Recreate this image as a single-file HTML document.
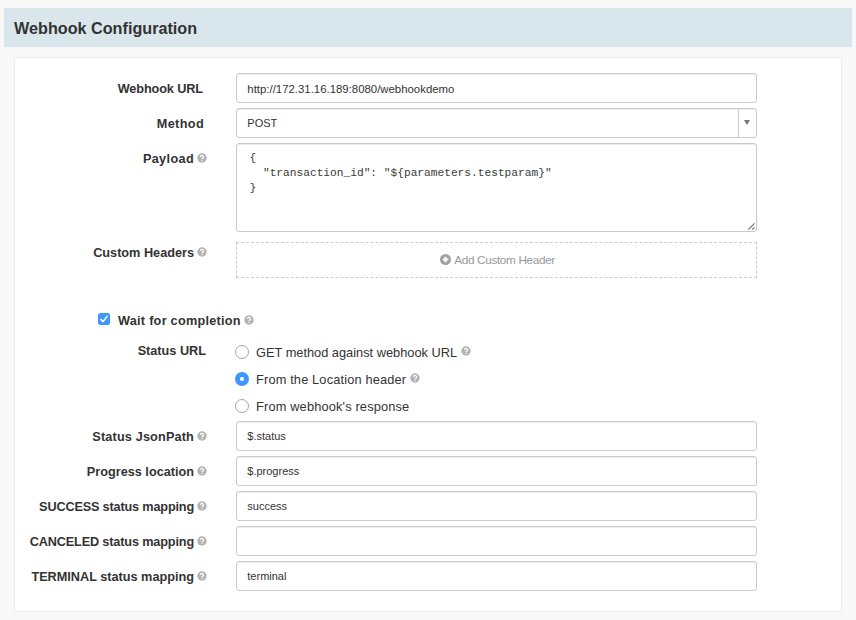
<!DOCTYPE html>
<html><head><meta charset="utf-8">
<style>
*{box-sizing:border-box;margin:0;padding:0}
html,body{width:856px;height:620px;overflow:hidden;background:#f8f8f8;font-family:"Liberation Sans",sans-serif;color:#333}
.hdr{position:absolute;left:4px;top:8px;width:848px;height:39px;background:#d9e7ec}
.hdr span{position:absolute;left:10px;top:11.2px;font-size:16.2px;font-weight:bold;color:#333;white-space:nowrap}
.panel{position:absolute;left:14px;top:57px;width:828px;height:555px;background:#fff;border:1px solid #ececec}
.lbl{position:absolute;font-weight:bold;font-size:12.7px;line-height:15px;color:#333;white-space:nowrap}
.r{right:653px}
.rh{right:649px}
.help{display:inline-block;width:10px;height:10px;vertical-align:top;margin-top:1.4px;margin-left:3px}
.inp{position:absolute;left:236px;width:521px;height:30px;border:1px solid #ccc;border-radius:3px;background:#fff;box-shadow:inset 0 1px 1px rgba(0,0,0,.075)}
.inp span{position:absolute;left:10.3px;top:7px;font-size:11px;line-height:14px;color:#333;white-space:nowrap}
.ta{position:absolute;left:236px;top:143px;width:521px;height:89px;border:1px solid #c8c8c8;border-radius:3px;background:#fff;box-shadow:inset 0 1px 1px rgba(0,0,0,.075)}
.ta pre{position:absolute;left:12.5px;top:7px;font-family:"Liberation Mono",monospace;font-size:11.2px;line-height:15px;color:#3a3a3a}
.dash{position:absolute;left:236px;top:242px;width:521px;height:36px;border:1px dashed #ccc}
.dash span{position:absolute;left:203px;top:10px;font-size:11.8px;letter-spacing:-.37px;color:#999;white-space:nowrap}
.plus{display:inline-block;width:11px;height:11px;vertical-align:top;margin-top:.5px;margin-right:3px;margin-left:.3px}
.cb{position:absolute;left:98px;top:313px;width:12px;height:12px;border-radius:2.5px;background:#3d98fb}
.rad{position:absolute;left:235px;width:14px;height:14px;border-radius:50%;border:1px solid #a6a6a6;background:#fff}
.rad.on{border:none;background:#3d98fb}
.rad.on::after{content:"";position:absolute;left:5.25px;top:5.25px;width:3.5px;height:3.5px;border-radius:50%;background:#fff}
.opt{position:absolute;left:256px;font-size:12.8px;line-height:15px;color:#333;white-space:nowrap}
.opt .help{margin-left:4px}
</style></head><body>
<div class="hdr"><span>Webhook Configuration</span></div>
<div class="panel"></div>

<div class="lbl r" style="top:82px"><span style="letter-spacing:-.1px">Webhook URL</span></div>
<div class="inp" style="top:73px"><span style="font-size:11.4px;top:7.5px">http://172.31.16.189:8080/webhookdemo</span></div>

<div class="lbl r" style="top:117px;right:652px"><span style="letter-spacing:.35px">Method</span></div>
<div class="inp" style="top:108px"><span>POST</span>
<div style="position:absolute;left:501px;top:0;width:1px;height:28px;background:#ccc"></div>
<div style="position:absolute;left:507px;top:11px;width:0;height:0;border-left:3px solid transparent;border-right:3px solid transparent;border-top:5px solid #777"></div>
</div>

<div class="lbl rh" style="top:152px"><span style="letter-spacing:.35px">Payload</span><svg class="help" viewBox="0 0 10 10"><circle cx="5" cy="5" r="4.7" fill="#b3b3b3"/><path d="M3.6 3.9A1.45 1.45 0 1 1 5.6 5.25Q5 5.55 5 6.2" fill="none" stroke="#fff" stroke-width="1.2"/><circle cx="5" cy="7.6" r=".7" fill="#fff"/></svg></div>
<div class="ta"><pre>{
  "transaction_id": "${parameters.testparam}"
}</pre><svg width="10" height="10" style="position:absolute;left:510px;top:77px"><path d="M1.3 8.6L7.6 2.3M5.2 8.6L7.6 6.3" stroke="#666" stroke-width="1.1"/></svg></div>

<div class="lbl rh" style="top:246px">Custom Headers<svg class="help" viewBox="0 0 10 10"><circle cx="5" cy="5" r="4.7" fill="#b3b3b3"/><path d="M3.6 3.9A1.45 1.45 0 1 1 5.6 5.25Q5 5.55 5 6.2" fill="none" stroke="#fff" stroke-width="1.2"/><circle cx="5" cy="7.6" r=".7" fill="#fff"/></svg></div>
<div class="dash"><span><svg class="plus" viewBox="0 0 11 11"><circle cx="5.5" cy="5.5" r="5.5" fill="#a0a0a0"/><path d="M5.5 2.7v5.6M2.7 5.5h5.6" stroke="#fff" stroke-width="2.1"/></svg>Add Custom Header</span></div>

<div class="cb"><svg width="12" height="12" style="position:absolute;left:0;top:0"><path d="M2.8 6.4L5.1 8.6L9.1 3.2" fill="none" stroke="#fff" stroke-width="1.5" stroke-linecap="round" stroke-linejoin="round"/></svg></div>
<div class="lbl" style="left:118px;top:314px"><span style="letter-spacing:.26px">Wait for completion</span><svg class="help" viewBox="0 0 10 10"><circle cx="5" cy="5" r="4.7" fill="#b3b3b3"/><path d="M3.6 3.9A1.45 1.45 0 1 1 5.6 5.25Q5 5.55 5 6.2" fill="none" stroke="#fff" stroke-width="1.2"/><circle cx="5" cy="7.6" r=".7" fill="#fff"/></svg></div>
<div class="lbl rh" style="top:344px;right:650px">Status URL</div>

<div class="rad" style="top:345px"></div>
<div class="opt" style="top:345px">GET method against webhook URL<svg class="help" viewBox="0 0 10 10"><circle cx="5" cy="5" r="4.7" fill="#b3b3b3"/><path d="M3.6 3.9A1.45 1.45 0 1 1 5.6 5.25Q5 5.55 5 6.2" fill="none" stroke="#fff" stroke-width="1.2"/><circle cx="5" cy="7.6" r=".7" fill="#fff"/></svg></div>
<div class="rad on" style="top:372px"></div>
<div class="opt" style="top:372px"><span style="letter-spacing:.15px">From the Location header</span><svg class="help" viewBox="0 0 10 10"><circle cx="5" cy="5" r="4.7" fill="#b3b3b3"/><path d="M3.6 3.9A1.45 1.45 0 1 1 5.6 5.25Q5 5.55 5 6.2" fill="none" stroke="#fff" stroke-width="1.2"/><circle cx="5" cy="7.6" r=".7" fill="#fff"/></svg></div>
<div class="rad" style="top:399px"></div>
<div class="opt" style="top:399px"><span style="letter-spacing:.16px">From webhook's response</span></div>

<div class="lbl rh" style="top:430px"><span style="letter-spacing:.15px">Status JsonPath</span><svg class="help" viewBox="0 0 10 10"><circle cx="5" cy="5" r="4.7" fill="#b3b3b3"/><path d="M3.6 3.9A1.45 1.45 0 1 1 5.6 5.25Q5 5.55 5 6.2" fill="none" stroke="#fff" stroke-width="1.2"/><circle cx="5" cy="7.6" r=".7" fill="#fff"/></svg></div>
<div class="inp" style="top:421px"><span>$.status</span></div>
<div class="lbl rh" style="top:465px">Progress location<svg class="help" viewBox="0 0 10 10"><circle cx="5" cy="5" r="4.7" fill="#b3b3b3"/><path d="M3.6 3.9A1.45 1.45 0 1 1 5.6 5.25Q5 5.55 5 6.2" fill="none" stroke="#fff" stroke-width="1.2"/><circle cx="5" cy="7.6" r=".7" fill="#fff"/></svg></div>
<div class="inp" style="top:456px"><span>$.progress</span></div>
<div class="lbl rh" style="top:500px"><span style="letter-spacing:-.17px">SUCCESS status mapping</span><svg class="help" viewBox="0 0 10 10"><circle cx="5" cy="5" r="4.7" fill="#b3b3b3"/><path d="M3.6 3.9A1.45 1.45 0 1 1 5.6 5.25Q5 5.55 5 6.2" fill="none" stroke="#fff" stroke-width="1.2"/><circle cx="5" cy="7.6" r=".7" fill="#fff"/></svg></div>
<div class="inp" style="top:491px"><span>success</span></div>
<div class="lbl rh" style="top:535px"><span style="letter-spacing:-.15px">CANCELED status mapping</span><svg class="help" viewBox="0 0 10 10"><circle cx="5" cy="5" r="4.7" fill="#b3b3b3"/><path d="M3.6 3.9A1.45 1.45 0 1 1 5.6 5.25Q5 5.55 5 6.2" fill="none" stroke="#fff" stroke-width="1.2"/><circle cx="5" cy="7.6" r=".7" fill="#fff"/></svg></div>
<div class="inp" style="top:526px"></div>
<div class="lbl rh" style="top:570px">TERMINAL status mapping<svg class="help" viewBox="0 0 10 10"><circle cx="5" cy="5" r="4.7" fill="#b3b3b3"/><path d="M3.6 3.9A1.45 1.45 0 1 1 5.6 5.25Q5 5.55 5 6.2" fill="none" stroke="#fff" stroke-width="1.2"/><circle cx="5" cy="7.6" r=".7" fill="#fff"/></svg></div>
<div class="inp" style="top:561px"><span>terminal</span></div>
</body></html>
